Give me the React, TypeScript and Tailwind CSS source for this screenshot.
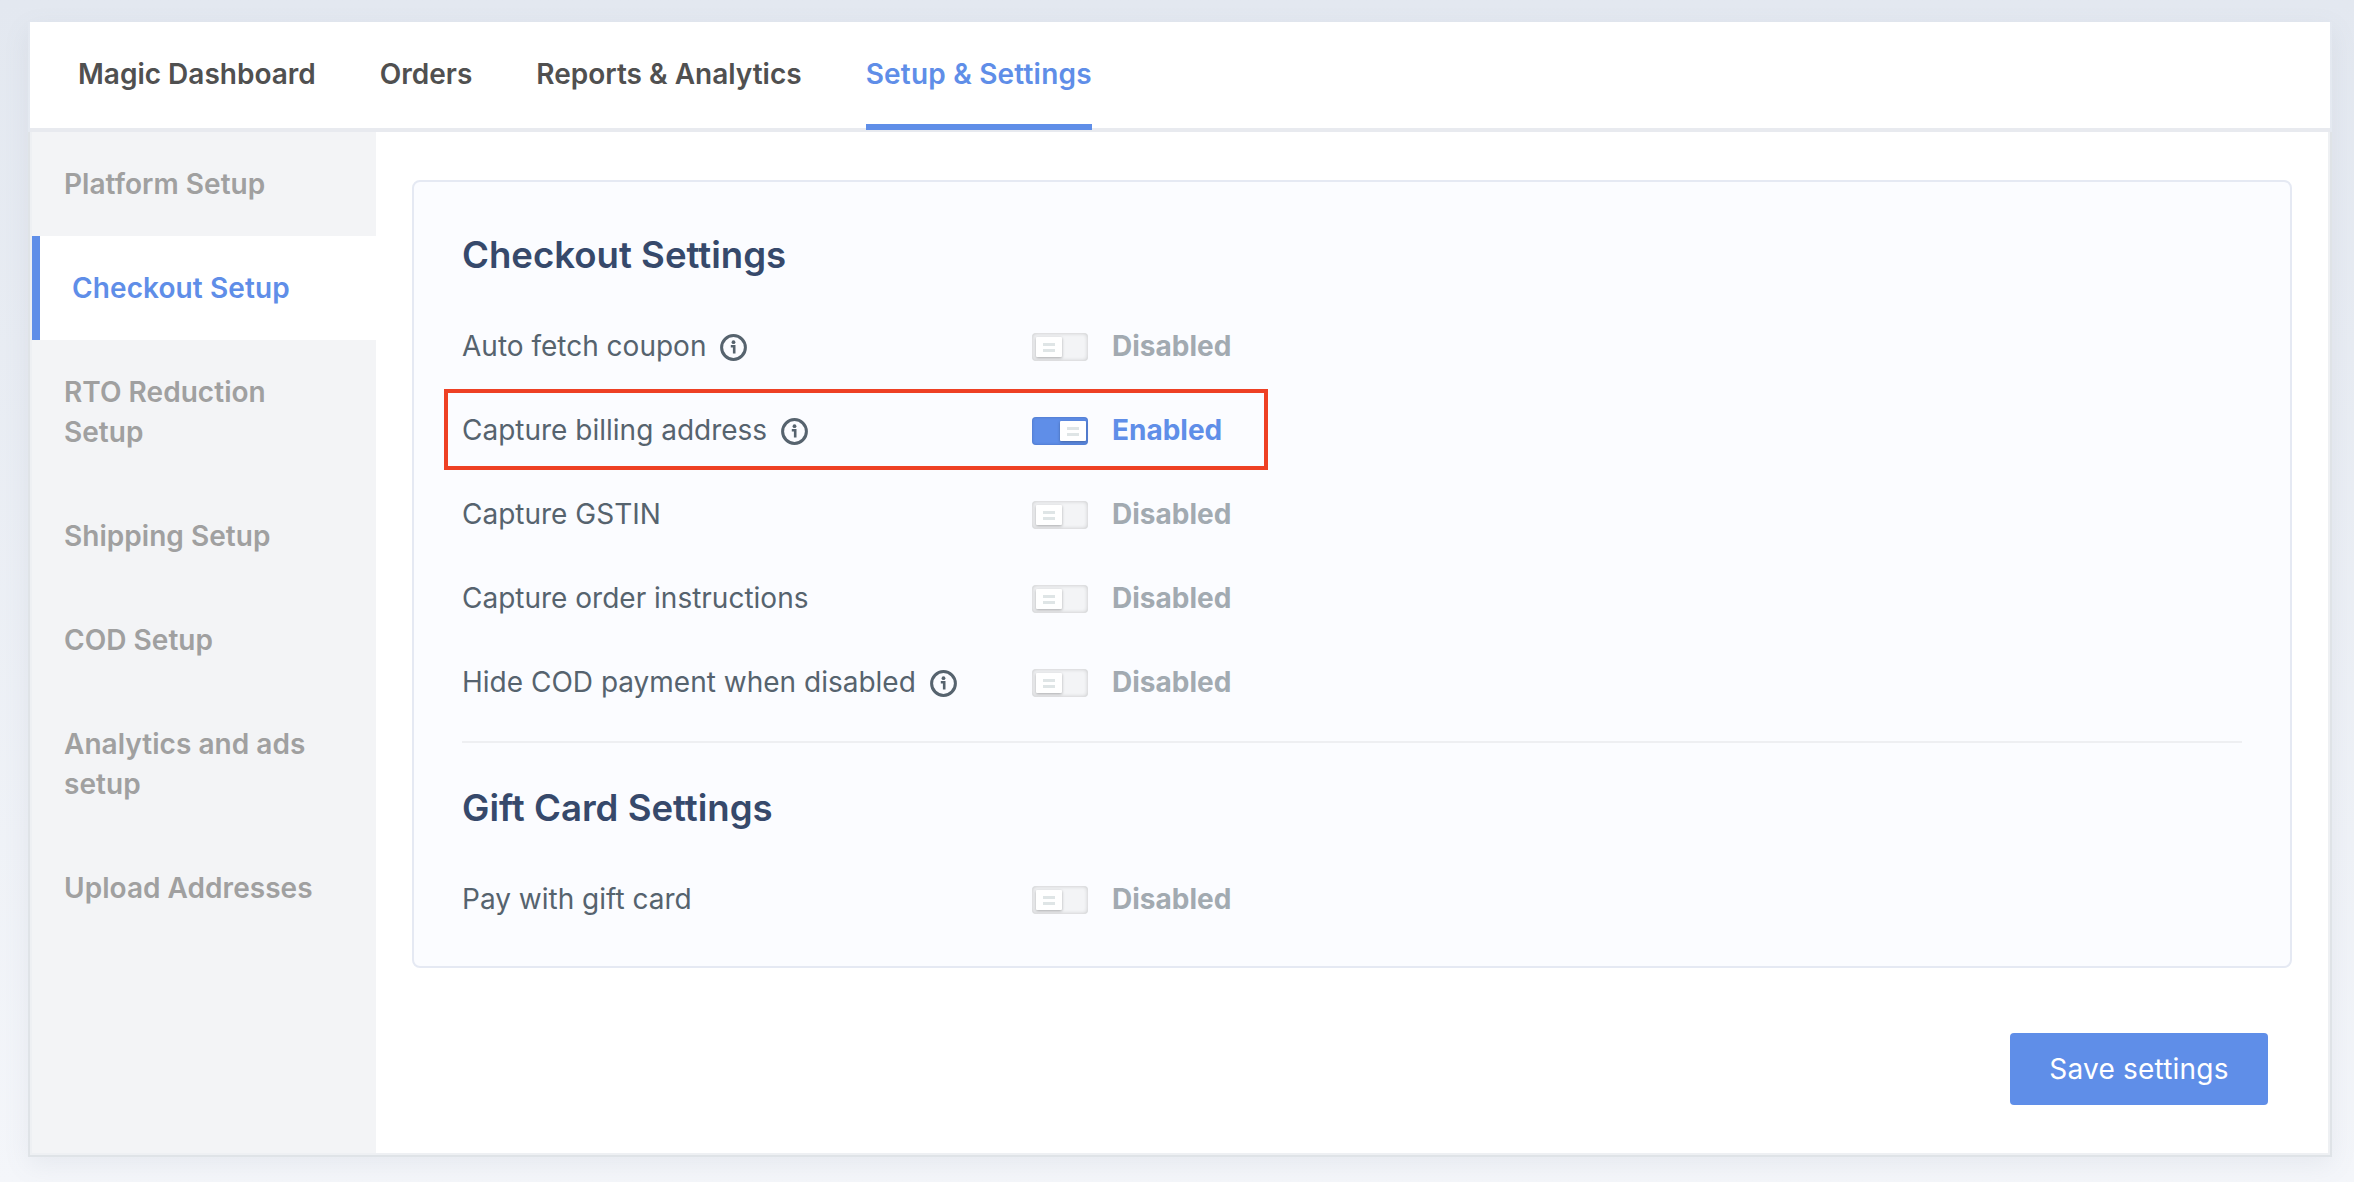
import React from "react";

function InfoIcon() {
  return (
    <svg width="27" height="27" viewBox="0 0 27 27" fill="none" className="ml-[14px] shrink-0">
      <circle cx="13.5" cy="13.5" r="11.9" stroke="#56636e" strokeWidth="3" />
      <circle cx="13.5" cy="8.2" r="1.9" fill="#56636e" />
      <path d="M10.8 12.2h3.4v7.2" stroke="#56636e" strokeWidth="2.6" />
    </svg>
  );
}

function Toggle({ on }: { on?: boolean }) {
  return (
    <div
      className={
        on
          ? "flex h-[28px] w-[56px] items-center justify-end rounded-[4px] bg-[#5f8ee8] pr-[2px] shadow-[inset_0_0_3px_rgba(40,70,140,0.45)]"
          : "flex h-[28px] w-[56px] items-center justify-start rounded-[4px] bg-[#f3f4f6] pl-[4px] shadow-[inset_0_0_4px_rgba(0,0,0,0.2)]"
      }
    >
      <div className="flex h-[20px] w-[26px] flex-col items-center justify-center gap-[3px] rounded-[1px] bg-white shadow-[0_1px_3px_rgba(0,0,0,0.3)]">
        <div className="h-[3px] w-[12px] bg-[#dfe5e6]" />
        <div className="h-[3px] w-[12px] bg-[#dfe5e6]" />
      </div>
    </div>
  );
}

function Row({ label, info, on, className }: { label: string; info?: boolean; on?: boolean; className?: string }) {
  return (
    <div className={"flex h-[28px] items-center " + (className ?? "")}>
      <div className="flex w-[570px] items-center text-[28px] leading-[28px] text-[#56636e]">
        <span className="pb-[3px]">{label}</span>
        {info && <InfoIcon />}
      </div>
      <Toggle on={on} />
      <span className={"ml-[24px] pb-[3px] text-[28px] font-bold leading-[28px] " + (on ? "text-[#5f8ee8]" : "text-[#a2aab1]")}>
        {on ? "Enabled" : "Disabled"}
      </span>
    </div>
  );
}

function SideItem({ label, active, twoLine }: { label: string; active?: boolean; twoLine?: boolean }) {
  if (active) {
    return (
      <div className="flex h-[104px] items-center border-l-[8px] border-[#5f8ee8] bg-white pl-[32px] text-[28px] font-semibold leading-[40px] tracking-[0.1px] text-[#5f8ee8]">
        {label}
      </div>
    );
  }
  return (
    <div
      className={
        "flex items-center pl-[32px] pr-[40px] text-[28px] font-semibold leading-[40px] tracking-[0.04px] text-[#a0a0a0] " +
        (twoLine ? "h-[144px]" : "h-[104px]")
      }
    >
      {label}
    </div>
  );
}

export default function App() {
  return (
    <div
      className="h-[1182px] w-[2354px] overflow-hidden bg-gradient-to-b from-[#e3e8f0] to-[#f4f6fa] pt-[22px] pl-[28px]"
      style={{ fontFamily: "Inter, 'Noto Sans', sans-serif" }}
    >
      <div className="flex h-[1135px] w-[2304px] flex-col shadow-[0_8px_24px_rgba(120,130,150,0.10)]">
        <nav className="mx-[2px] flex h-[110px] shrink-0 items-start gap-[64px] border-b-[4px] border-[#e8eaef] bg-white pl-[48px] text-[28px] font-semibold leading-[40px] text-[#505050]">
          <div className="flex h-[104px] items-center">Magic Dashboard</div>
          <div className="flex h-[104px] items-center">Orders</div>
          <div className="flex h-[104px] items-center">Reports &amp; Analytics</div>
          <div className="flex h-[108px] items-center border-b-[6px] border-[#5f8ee8] pt-[2px] tracking-[0.2px] text-[#5f8ee8]">Setup &amp; Settings</div>
        </nav>
        <div className="flex min-h-0 flex-1 border-x-[2px] border-b-[2px] border-[#dfe3e7] bg-[#eef0f3] pl-[2px] pr-[2px] pb-[2px]">
          <aside className="flex w-[344px] shrink-0 flex-col bg-[#f3f4f6]">
            <SideItem label="Platform Setup" />
            <SideItem label="Checkout Setup" active />
            <SideItem label="RTO Reduction Setup" twoLine />
            <SideItem label="Shipping Setup" />
            <SideItem label="COD Setup" />
            <SideItem label="Analytics and ads setup" twoLine />
            <SideItem label="Upload Addresses" />
          </aside>
          <main className="flex min-w-0 flex-1 flex-col bg-white pl-[36px] pr-[36px] pt-[48px]">
            <section className="h-[788px] rounded-[8px] border-[2px] border-[#e5e9f3] bg-[#fbfcff] px-[48px] pt-[47px]">
              <h2 className="text-[36.6px] font-semibold leading-[52px] text-[#36496b]">Checkout Settings</h2>
              <div className="relative mt-[52px] flex flex-col gap-[56px]">
                <Row label="Auto fetch coupon" info />
                <div className="relative">
                  <div className="absolute -left-[18px] -top-[28px] h-[81px] w-[824px] border-[4px] border-[#ee4024]" />
                  <Row label="Capture billing address" info on />
                </div>
                <Row label="Capture GSTIN" />
                <Row label="Capture order instructions" />
                <Row label="Hide COD payment when disabled" info />
              </div>
              <div className="mt-[44px] h-[2px] bg-[#eeeff2]" />
              <h2 className="mt-[39px] text-[36.6px] font-semibold leading-[52px] text-[#36496b]">Gift Card Settings</h2>
              <Row label="Pay with gift card" className="mt-[52px]" />
            </section>
            <div className="mt-[65px] flex justify-end pr-[24px]">
              <button className="h-[72px] w-[258px] rounded-[4px] bg-[#5f8ee8] text-[28px] leading-[40px] tracking-[0.2px] text-white">Save settings</button>
            </div>
          </main>
        </div>
      </div>
    </div>
  );
}
